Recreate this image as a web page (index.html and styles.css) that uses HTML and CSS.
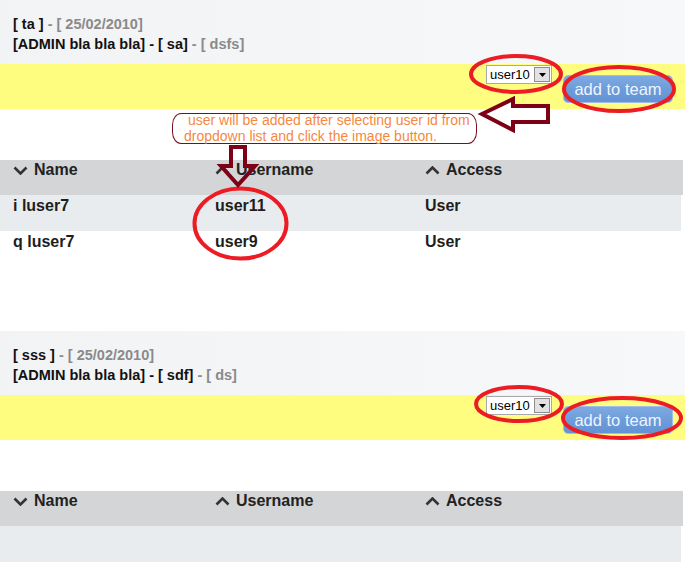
FILE: index.html
```html
<!DOCTYPE html>
<html lang="en">
<head>
<meta charset="utf-8">
<title>Teams</title>
<link rel="stylesheet" href="styles.css">
</head>
<body>
<div class="page">

  <section class="team">
    <div class="team-info">
      <div class="line"><span class="strong">[ ta ]</span> <span class="muted">- [ 25/02/2010]</span></div>
      <div class="line"><span class="strong">[ADMIN bla bla bla] - [ sa]</span> <span class="muted">- [ dsfs]</span></div>
    </div>
    <div class="team-actions">
      <div class="picker"><span class="picker-value">user10</span><span class="picker-btn"><svg width="7" height="4" viewBox="0 0 7 4"><polygon points="0,0 7,0 3.5,4" fill="#000"/></svg></span></div>
      <button class="add-btn" type="button">add to team</button>
    </div>
    <div class="grid">
      <div class="grid-head">
        <div class="cell"><svg class="chev" width="15" height="9" viewBox="0 0 15 9"><polyline points="1.5,1.5 7.5,7.5 13.5,1.5" /></svg>Name</div>
        <div class="cell"><svg class="chev" width="15" height="9" viewBox="0 0 15 9"><polyline points="1.5,7.5 7.5,1.5 13.5,7.5" /></svg>Username</div>
        <div class="cell"><svg class="chev" width="15" height="9" viewBox="0 0 15 9"><polyline points="1.5,7.5 7.5,1.5 13.5,7.5" /></svg>Access</div>
      </div>
      <div class="grid-row alt">
        <div class="cell">i luser7</div>
        <div class="cell">user11</div>
        <div class="cell">User</div>
      </div>
      <div class="grid-row">
        <div class="cell">q luser7</div>
        <div class="cell">user9</div>
        <div class="cell">User</div>
      </div>
    </div>
  </section>

  <section class="team team-second">
    <div class="team-info">
      <div class="line"><span class="strong">[ sss ]</span> <span class="muted">- [ 25/02/2010]</span></div>
      <div class="line"><span class="strong">[ADMIN bla bla bla] - [ sdf]</span> <span class="muted">- [ ds]</span></div>
    </div>
    <div class="team-actions">
      <div class="picker"><span class="picker-value">user10</span><span class="picker-btn"><svg width="7" height="4" viewBox="0 0 7 4"><polygon points="0,0 7,0 3.5,4" fill="#000"/></svg></span></div>
      <button class="add-btn" type="button">add to team</button>
    </div>
    <div class="grid">
      <div class="grid-head">
        <div class="cell"><svg class="chev" width="15" height="9" viewBox="0 0 15 9"><polyline points="1.5,1.5 7.5,7.5 13.5,1.5" /></svg>Name</div>
        <div class="cell"><svg class="chev" width="15" height="9" viewBox="0 0 15 9"><polyline points="1.5,7.5 7.5,1.5 13.5,7.5" /></svg>Username</div>
        <div class="cell"><svg class="chev" width="15" height="9" viewBox="0 0 15 9"><polyline points="1.5,7.5 7.5,1.5 13.5,7.5" /></svg>Access</div>
      </div>
      <div class="grid-row alt empty"></div>
    </div>
  </section>

  <div class="callout"><div class="callout-text">user will be added after selecting user id from</div><div>dropdown list and click the image button.</div></div>

  <svg class="marks" width="685" height="568" viewBox="0 0 685 568">
    <g fill="none" stroke="#ec1c24" stroke-width="4">
      <ellipse cx="516" cy="74" rx="45" ry="18"/>
      <ellipse cx="619" cy="89" rx="55" ry="22"/>
      <ellipse cx="240.5" cy="223.5" rx="46" ry="35"/>
      <ellipse cx="519" cy="404" rx="43" ry="17"/>
      <ellipse cx="622" cy="418" rx="59" ry="20"/>
    </g>
    <g fill="#fff" stroke="#7d0017" stroke-width="4" stroke-linejoin="miter">
      <polygon points="482,114 513,99 513,106 548,106 548,122 513,122 513,130"/>
    </g>
    <g fill="none" stroke="#7d0017" stroke-width="4" stroke-linejoin="miter">
      <polygon points="231,147 245,147 245,166 255,166 238,185 221,166 231,166"/>
    </g>
  </svg>

</div>
</body>
</html>
```

FILE: styles.css
```css
* { box-sizing: border-box; }

body {
  margin: 0;
  background: #fff;
  font-family: "Liberation Sans", Arial, sans-serif;
  color: #1c1c1c;
}

.page {
  position: relative;
  width: 685px;
  height: 568px;
  overflow: hidden;
}

.team-second { margin-top: 64px; }

.team-info {
  height: 64px;
  padding: 14px 13px 0;
  background: linear-gradient(to right, #f2f3f5, #f7f8fa);
  font-size: 14.5px;
  font-weight: bold;
  line-height: 20px;
}

.strong { color: #111; }
.muted { color: #8a8a8a; }

.team-actions {
  height: 45px;
  background: #fffd80;
  display: flex;
  justify-content: flex-end;
  align-items: flex-start;
  gap: 11px;
  padding: 1px 12px 0 0;
}

.picker {
  width: 66px;
  height: 19px;
  background: #fff;
  border: 1px solid #a9a9a9;
  display: flex;
  align-items: center;
  justify-content: space-between;
  padding: 0 1px 0 3px;
  font-size: 13px;
  color: #000;
}

.picker-btn {
  width: 16px;
  height: 15px;
  background: #e2e2e2;
  border: 1px solid #8d8d8d;
  display: flex;
  align-items: center;
  justify-content: center;
}

.add-btn {
  margin-top: 10px;
  width: 110px;
  height: 28px;
  border: 1px solid #9fbde6;
  border-radius: 5px;
  background: linear-gradient(#7eaae2, #6c9bd9 55%, #6393d3);
  color: #eef4ff;
  font-family: "Liberation Sans", Arial, sans-serif;
  font-size: 16.5px;
  padding: 0;
  line-height: 26px;
}

.grid { margin-top: 51px; width: 683px; }

.grid-head,
.grid-row {
  display: grid;
  grid-template-columns: 202px 210px 1fr;
  font-size: 16px;
  font-weight: bold;
  line-height: 18px;
}

.grid-head {
  height: 35px;
  background: #d4d5d7;
  padding-top: 1px;
  color: #222;
}

.grid-row {
  height: 36px;
  padding-top: 2px;
  color: #1e1e1e;
}

.grid-row.alt { background: #e8ecef; width: 681px; }

.cell {
  padding-left: 13px;
  display: flex;
  align-items: flex-start;
}

.grid-head .cell { align-items: center; height: 18px; }

.chev {
  flex: none;
  margin-right: 6px;
  fill: none;
  stroke: #333;
  stroke-width: 2.6;
}

.callout {
  position: absolute;
  left: 172px;
  top: 113px;
  width: 305px;
  height: 31px;
  border: 1px solid #7b0d1e;
  border-radius: 9px / 12px;
  padding: 0 0 0 11px;
  font-family: "Liberation Sans", Arial, sans-serif;
  font-size: 14px;
  line-height: 16px;
  color: #f5883f;
  background: #fff;
}

.callout-text { text-indent: 4px; margin-top: -2px; }

.marks {
  position: absolute;
  left: 0;
  top: 0;
  pointer-events: none;
}
```
